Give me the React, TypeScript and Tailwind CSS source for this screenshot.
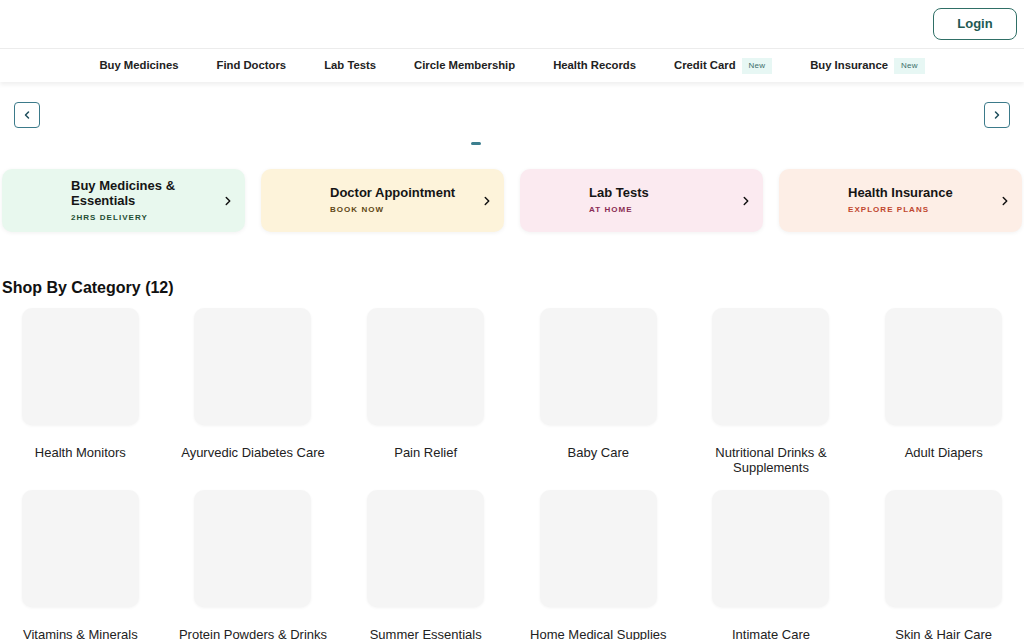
import { ChevronLeft, ChevronRight } from 'lucide-react'

const NAV = [
  { label: 'Buy Medicines' },
  { label: 'Find Doctors' },
  { label: 'Lab Tests' },
  { label: 'Circle Membership' },
  { label: 'Health Records' },
  { label: 'Credit Card', isNew: true },
  { label: 'Buy Insurance', isNew: true },
]

const SERVICES = [
  { title: 'Buy Medicines & Essentials', sub: '2HRS DELIVERY', bg: 'bg-[#e8f8ee]', subColor: 'text-[#1f4d33]' },
  { title: 'Doctor Appointment', sub: 'BOOK NOW', bg: 'bg-[#fdf3da]', subColor: 'text-[#5e4714]' },
  { title: 'Lab Tests', sub: 'AT HOME', bg: 'bg-[#fbeaf0]', subColor: 'text-[#8a2c55]' },
  { title: 'Health Insurance', sub: 'EXPLORE PLANS', bg: 'bg-[#fdeee6]', subColor: 'text-[#c0472e]' },
]

const CATEGORIES = [
  'Health Monitors',
  'Ayurvedic Diabetes Care',
  'Pain Relief',
  'Baby Care',
  'Nutritional Drinks & Supplements',
  'Adult Diapers',
  'Vitamins & Minerals',
  'Protein Powders & Drinks',
  'Summer Essentials',
  'Home Medical Supplies',
  'Intimate Care',
  'Skin & Hair Care',
]

const App = () => {
  return (
    <div className="w-[1024px] h-[640px] overflow-hidden bg-white text-[#1a1a1a]" style={{ fontFamily: '"Liberation Sans", Arial, sans-serif' }}>
      {/* top bar */}
      <header className="h-12 flex items-center justify-end pr-[7px]">
        <button className="w-[84px] h-[32px] border border-[#2f6f66] rounded-[8px] text-[13px] font-bold text-[#1f5a53]">
          Login
        </button>
      </header>

      {/* main nav */}
      <nav className="h-[34px] border-t border-[#ececec] flex items-center justify-center gap-[38px] shadow-[0_3px_4px_rgba(0,0,0,0.06)]">
        {NAV.map((item) => (
          <span key={item.label} className="flex items-center text-[11.3px] font-bold text-[#222]">
            {item.label}
            {item.isNew && (
              <span className="ml-[6px] px-[7px] py-[2px] bg-[#e7f7f4] text-[#3b6e69] text-[8px] font-normal tracking-wide">New</span>
            )}
          </span>
        ))}
      </nav>

      {/* banner carousel controls */}
      <div className="h-[87px] flex flex-col">
        <div className="flex justify-between px-[14px] pt-[20px]">
          <button className="w-[26px] h-[26px] border border-[#3b7a8a] rounded-[4px] flex items-center justify-center text-[#1e4e5c]">
            <ChevronLeft size={12} strokeWidth={3} />
          </button>
          <button className="w-[26px] h-[26px] border border-[#3b7a8a] rounded-[4px] flex items-center justify-center text-[#1e4e5c]">
            <ChevronRight size={12} strokeWidth={3} />
          </button>
        </div>
        <div className="flex justify-center mt-[14px]">
          <span className="w-[10px] h-[3px] rounded-full bg-[#3c7f8f] ml-[-72px]" />
        </div>
      </div>

      {/* service cards */}
      <div className="grid grid-cols-4 gap-4 px-[2px]">
        {SERVICES.map((s) => (
          <div key={s.title} className={`${s.bg} h-[63px] rounded-[10px] shadow-[0_1px_4px_rgba(0,0,0,0.06)] flex items-center justify-between pl-[69px] pr-[10px]`}>
            <div>
              <div className="text-[13px] font-bold leading-[15px] text-[#151515] max-w-[130px]">{s.title}</div>
              <div className={`${s.subColor} text-[8px] font-bold tracking-[0.13em] mt-[4px]`}>{s.sub}</div>
            </div>
            <ChevronRight size={14} strokeWidth={2.5} className="text-[#111]" />
          </div>
        ))}
      </div>

      {/* categories */}
      <h2 className="mt-[46px] pl-[2px] text-[16px] leading-[20px] font-bold text-[#111]">Shop By Category (12)</h2>
      <div className="grid grid-cols-6 gap-x-4 gap-y-[15px] px-[2px] mt-[10px]">
        {CATEGORIES.map((c) => (
          <div key={c} className="flex flex-col items-center">
            <div className="w-[117px] h-[117px] rounded-[10px] bg-[#f5f5f5] shadow-[0_1px_3px_rgba(0,0,0,0.05)]" />
            <div className="mt-[20px] text-[13px] leading-[15px] text-[#222] text-center h-[30px]">{c}</div>
          </div>
        ))}
      </div>
    </div>
  )
}

export default App
